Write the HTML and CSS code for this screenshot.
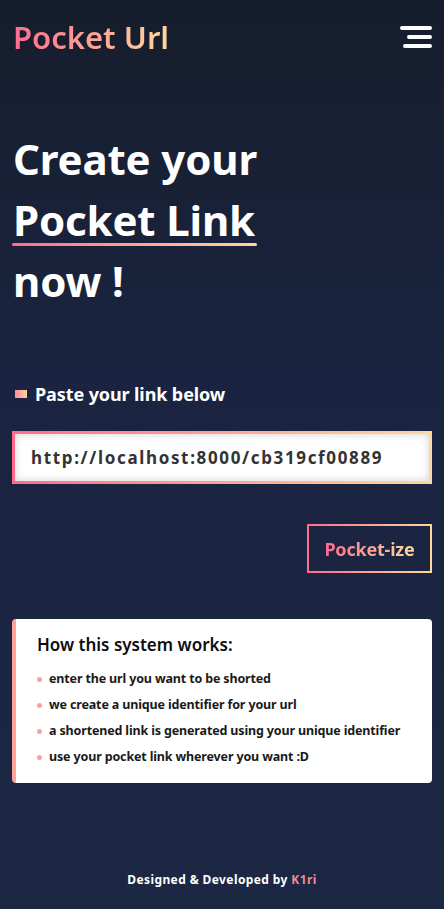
FILE: index.html
```html
<!DOCTYPE html>
<html lang="en">
<head>
<meta charset="utf-8">
<title>Pocket Url</title>
<link rel="stylesheet" href="styles.css">
</head>
<body>
<div class="page">
  <header class="nav">
    <div class="logo">Pocket Url</div>
    <div class="burger" aria-label="menu">
      <span class="b1"></span><span class="b2"></span><span class="b3"></span>
    </div>
  </header>

  <main class="main">
    <h1 class="hero">Create your<br><span class="hl">Pocket Link</span><br>now !</h1>

    <div class="label"><span class="sq"></span>Paste your link below</div>
    <div class="inputwrap">
      <div class="input">http://localhost:8000/cb319cf00889</div>
    </div>

    <div class="btnrow">
      <div class="btn"><span class="btntext">Pocket-ize</span></div>
    </div>

    <section class="card">
      <h2 class="cardtitle">How this system works:</h2>
      <ul class="steps">
        <li>enter the url you want to be shorted</li>
        <li>we create a unique identifier for your url</li>
        <li>a shortened link is generated using your unique identifier</li>
        <li>use your pocket link wherever you want :D</li>
      </ul>
    </section>
  </main>

  <footer class="footer">Designed &amp; Developed by <span class="author">K1ri</span></footer>
</div>
</body>
</html>
```
FILE: styles.css
```css
* { box-sizing: border-box; }
html, body { margin: 0; padding: 0; }
body {
  font-family: "Noto Sans", "Open Sans", sans-serif;
  background: linear-gradient(180deg, #161d2c 0%, #1a2440 40%, #1c2743 100%);
  min-height: 909px;
  color: #fff;
}
.page {
  min-height: 909px;
  display: flex;
  flex-direction: column;
  padding: 0 12px;
}
.nav {
  display: flex;
  justify-content: space-between;
  align-items: center;
  height: 74px;
  padding-left: 1px;
}
.logo {
  font-size: 31px;
  font-weight: 600;
  line-height: 40px;
  background: linear-gradient(90deg, #ff6b8f 0%, #ffd89b 100%);
  -webkit-background-clip: text;
  background-clip: text;
  color: transparent;
}
.burger {
  display: flex;
  flex-direction: column;
  align-items: flex-end;
  gap: 5px;
  width: 32px;
}
.burger span {
  display: block;
  height: 4px;
  background: #fff;
  border-radius: 2px;
}
.b1 { width: 32px; }
.b2 { width: 25px; }
.b3 { width: 29px; }

.main { flex: 1; }
.hero {
  margin: 54px 0 0 1px;
  font-size: 42px;
  font-weight: 700;
  line-height: 61px;
  letter-spacing: -0.15px;
}
.hl {
  display: inline-block;
  position: relative;
  line-height: 58px;
}
.hl::after {
  content: "";
  position: absolute;
  left: -1px;
  right: -2px;
  bottom: 3px;
  height: 3px;
  border-radius: 2px;
  background: linear-gradient(90deg, #ff6b8f, #ffd89b);
}
.label {
  display: flex;
  align-items: center;
  gap: 8px;
  margin: 71px 0 0 3px;
  font-size: 18px;
  line-height: 24px;
  font-weight: 700;
  letter-spacing: -0.1px;
}
.sq {
  width: 12px;
  height: 8px;
  background: linear-gradient(90deg, #ff8c9a, #ffd2a0);
}
.inputwrap {
  margin-top: 25px;
  padding: 3px;
  background: linear-gradient(90deg, #ff6b8f 0%, #ffd89b 100%);
}
.input {
  height: 47px;
  background: #fff;
  box-shadow: inset 0 0 8px rgba(0,0,0,0.18);
  display: flex;
  align-items: center;
  padding-left: 16px;
  font-size: 17px;
  font-weight: 700;
  letter-spacing: 1.65px;
  color: #333;
}
.btnrow {
  display: flex;
  justify-content: flex-end;
  margin-top: 40px;
}
.btn {
  width: 125px;
  height: 49px;
  display: flex;
  align-items: center;
  justify-content: center;
  border: 2px solid transparent;
  background:
    linear-gradient(#1b2541, #1b2541) padding-box,
    linear-gradient(90deg, #ff6b8f, #ffd89b) border-box;
}
.btntext {
  font-size: 18px;
  font-weight: 700;
  letter-spacing: -0.2px;
  background: linear-gradient(90deg, #ff6b8f, #ffd89b);
  -webkit-background-clip: text;
  background-clip: text;
  color: transparent;
}
.card {
  margin-top: 46px;
  background: #fff;
  border-radius: 4px;
  border-left: 4px solid #ffa29c;
  padding: 14px 10px 13px 21px;
  color: #111;
}
.cardtitle {
  margin: 0;
  font-size: 17px;
  line-height: 24px;
  font-weight: 600;
  color: #0d0d12;
}
.steps {
  list-style: none;
  margin: 9px 0 0;
  padding: 0;
}
.steps li {
  position: relative;
  padding-left: 12px;
  font-size: 12.5px;
  font-weight: 700;
  line-height: 26px;
  letter-spacing: -0.15px;
  color: #1a1a1a;
}
.steps li::before {
  content: "";
  position: absolute;
  left: 0;
  top: 11px;
  width: 5px;
  height: 5px;
  border-radius: 50%;
  background: #ff9ea0;
}
.footer {
  text-align: center;
  font-size: 12px;
  font-weight: 700;
  letter-spacing: 0.4px;
  padding: 0 0 21px;
}
.author { color: #f08a94; }
```
